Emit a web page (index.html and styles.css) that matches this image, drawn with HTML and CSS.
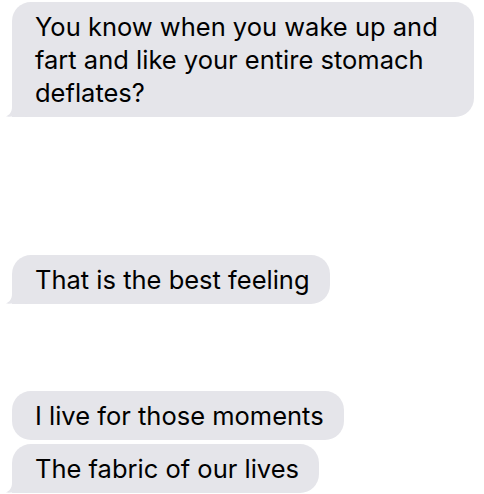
FILE: index.html
```html
<!DOCTYPE html>
<html>
<head>
	<meta charset="utf-8">
	<meta name="viewport" content="width=device-width, initial-scale=1">
	<title>Messages</title>
	<link rel="stylesheet" href="styles.css">
</head>
<body>
	<div class="thread">
		<div class="group first">
			<div class="bubble tail wide">
				You know when you wake up and fart and like your entire stomach deflates?
				<svg class="tail-svg" width="24" height="20" viewBox="0 0 24 20"><path d="M6 0 L6 10 C6 15 3.5 18 0 19.5 C5 20 10 19 13.5 16.5 C17 19 20 20 24 20 L24 0 Z"/></svg>
			</div>
		</div>
		<div class="group second">
			<div class="bubble tail">
				That is the best feeling
				<svg class="tail-svg" width="24" height="20" viewBox="0 0 24 20"><path d="M6 0 L6 10 C6 15 3.5 18 0 19.5 C5 20 10 19 13.5 16.5 C17 19 20 20 24 20 L24 0 Z"/></svg>
			</div>
		</div>
		<div class="group third">
			<div class="bubble">I live for those moments</div>
			<div class="bubble tail">
				The fabric of our lives
				<svg class="tail-svg" width="24" height="20" viewBox="0 0 24 20"><path d="M6 0 L6 10 C6 15 3.5 18 0 19.5 C5 20 10 19 13.5 16.5 C17 19 20 20 24 20 L24 0 Z"/></svg>
			</div>
		</div>
	</div>
</body>
</html>
```

FILE: styles.css
```css
*{
	margin: 0;
	padding: 0;
	box-sizing: border-box;
}
body{
	background: #ffffff;
	font-family: "Inter", "Liberation Sans", Arial, sans-serif;
	color: #000000;
}
.thread{
	display: flex;
	flex-direction: column;
	padding: 2px 10px 0 12px;
}
.group{
	display: flex;
	flex-direction: column;
	align-items: flex-start;
	gap: 4px;
}
.second{
	margin-top: 138px;
}
.third{
	margin-top: 87px;
}
.bubble{
	position: relative;
	background: #e5e5ea;
	border-radius: 19px;
	padding: 8px 20px 8px 23px;
	font-size: 25.5px;
	line-height: 33px;
	max-width: 462px;
}
.wide{
	width: 462px;
}
.tail{
	border-bottom-left-radius: 0;
}
.tail-svg{
	position: absolute;
	left: -6px;
	bottom: 0;
	fill: #e5e5ea;
}
```
